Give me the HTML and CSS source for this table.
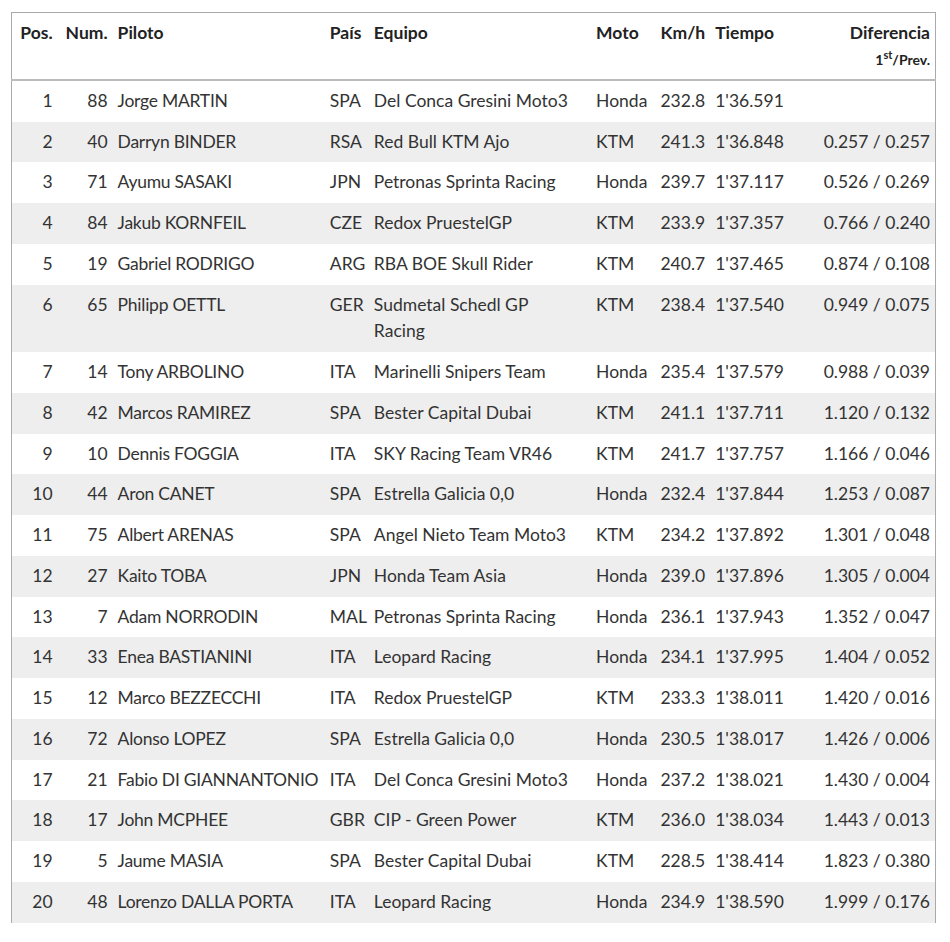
FILE: index.html
```html
<!DOCTYPE html>
<html lang="es">
<head>
<meta charset="utf-8">
<title>Clasificación</title>
<link rel="stylesheet" href="styles.css">
</head>
<body>
<div class="wrap">
<table class="results">
  <colgroup>
    <col class="c-pos"><col class="c-num"><col class="c-rider"><col class="c-nat"><col class="c-team"><col class="c-bike"><col class="c-speed"><col class="c-time"><col class="c-gap">
  </colgroup>
  <thead>
    <tr>
      <th class="r">Pos.</th>
      <th class="r">Num.</th>
      <th>Piloto</th>
      <th>País</th>
      <th>Equipo</th>
      <th>Moto</th>
      <th class="r">Km/h</th>
      <th>Tiempo</th>
      <th class="r">Diferencia<span class="sub">1<sup>st</sup>/Prev.</span></th>
    </tr>
  </thead>
  <tbody>
    <tr><td class="r">1</td><td class="r">88</td><td class="rider">Jorge MARTIN</td><td>SPA</td><td class="team">Del Conca Gresini Moto3</td><td>Honda</td><td class="r">232.8</td><td>1'36.591</td><td class="r"></td></tr>
    <tr><td class="r">2</td><td class="r">40</td><td class="rider">Darryn BINDER</td><td>RSA</td><td class="team">Red Bull KTM Ajo</td><td>KTM</td><td class="r">241.3</td><td>1'36.848</td><td class="r">0.257 / 0.257</td></tr>
    <tr><td class="r">3</td><td class="r">71</td><td class="rider">Ayumu SASAKI</td><td>JPN</td><td class="team">Petronas Sprinta Racing</td><td>Honda</td><td class="r">239.7</td><td>1'37.117</td><td class="r">0.526 / 0.269</td></tr>
    <tr><td class="r">4</td><td class="r">84</td><td class="rider">Jakub KORNFEIL</td><td>CZE</td><td class="team">Redox PruestelGP</td><td>KTM</td><td class="r">233.9</td><td>1'37.357</td><td class="r">0.766 / 0.240</td></tr>
    <tr><td class="r">5</td><td class="r">19</td><td class="rider">Gabriel RODRIGO</td><td>ARG</td><td class="team">RBA BOE Skull Rider</td><td>KTM</td><td class="r">240.7</td><td>1'37.465</td><td class="r">0.874 / 0.108</td></tr>
    <tr><td class="r">6</td><td class="r">65</td><td class="rider">Philipp OETTL</td><td>GER</td><td class="team">Sudmetal Schedl GP Racing</td><td>KTM</td><td class="r">238.4</td><td>1'37.540</td><td class="r">0.949 / 0.075</td></tr>
    <tr><td class="r">7</td><td class="r">14</td><td class="rider">Tony ARBOLINO</td><td>ITA</td><td class="team">Marinelli Snipers Team</td><td>Honda</td><td class="r">235.4</td><td>1'37.579</td><td class="r">0.988 / 0.039</td></tr>
    <tr><td class="r">8</td><td class="r">42</td><td class="rider">Marcos RAMIREZ</td><td>SPA</td><td class="team">Bester Capital Dubai</td><td>KTM</td><td class="r">241.1</td><td>1'37.711</td><td class="r">1.120 / 0.132</td></tr>
    <tr><td class="r">9</td><td class="r">10</td><td class="rider">Dennis FOGGIA</td><td>ITA</td><td class="team">SKY Racing Team VR46</td><td>KTM</td><td class="r">241.7</td><td>1'37.757</td><td class="r">1.166 / 0.046</td></tr>
    <tr><td class="r">10</td><td class="r">44</td><td class="rider">Aron CANET</td><td>SPA</td><td class="team">Estrella Galicia 0,0</td><td>Honda</td><td class="r">232.4</td><td>1'37.844</td><td class="r">1.253 / 0.087</td></tr>
    <tr><td class="r">11</td><td class="r">75</td><td class="rider">Albert ARENAS</td><td>SPA</td><td class="team">Angel Nieto Team Moto3</td><td>KTM</td><td class="r">234.2</td><td>1'37.892</td><td class="r">1.301 / 0.048</td></tr>
    <tr><td class="r">12</td><td class="r">27</td><td class="rider">Kaito TOBA</td><td>JPN</td><td class="team">Honda Team Asia</td><td>Honda</td><td class="r">239.0</td><td>1'37.896</td><td class="r">1.305 / 0.004</td></tr>
    <tr><td class="r">13</td><td class="r">7</td><td class="rider">Adam NORRODIN</td><td>MAL</td><td class="team">Petronas Sprinta Racing</td><td>Honda</td><td class="r">236.1</td><td>1'37.943</td><td class="r">1.352 / 0.047</td></tr>
    <tr><td class="r">14</td><td class="r">33</td><td class="rider">Enea BASTIANINI</td><td>ITA</td><td class="team">Leopard Racing</td><td>Honda</td><td class="r">234.1</td><td>1'37.995</td><td class="r">1.404 / 0.052</td></tr>
    <tr><td class="r">15</td><td class="r">12</td><td class="rider">Marco BEZZECCHI</td><td>ITA</td><td class="team">Redox PruestelGP</td><td>KTM</td><td class="r">233.3</td><td>1'38.011</td><td class="r">1.420 / 0.016</td></tr>
    <tr><td class="r">16</td><td class="r">72</td><td class="rider">Alonso LOPEZ</td><td>SPA</td><td class="team">Estrella Galicia 0,0</td><td>Honda</td><td class="r">230.5</td><td>1'38.017</td><td class="r">1.426 / 0.006</td></tr>
    <tr><td class="r">17</td><td class="r">21</td><td class="rider">Fabio DI GIANNANTONIO</td><td>ITA</td><td class="team">Del Conca Gresini Moto3</td><td>Honda</td><td class="r">237.2</td><td>1'38.021</td><td class="r">1.430 / 0.004</td></tr>
    <tr><td class="r">18</td><td class="r">17</td><td class="rider">John MCPHEE</td><td>GBR</td><td class="team">CIP - Green Power</td><td>KTM</td><td class="r">236.0</td><td>1'38.034</td><td class="r">1.443 / 0.013</td></tr>
    <tr><td class="r">19</td><td class="r">5</td><td class="rider">Jaume MASIA</td><td>SPA</td><td class="team">Bester Capital Dubai</td><td>KTM</td><td class="r">228.5</td><td>1'38.414</td><td class="r">1.823 / 0.380</td></tr>
    <tr><td class="r">20</td><td class="r">48</td><td class="rider">Lorenzo DALLA PORTA</td><td>ITA</td><td class="team">Leopard Racing</td><td>Honda</td><td class="r">234.9</td><td>1'38.590</td><td class="r">1.999 / 0.176</td></tr>
  </tbody>
</table>
</div>
</body>
</html>
```

FILE: styles.css
```css
html, body {
  margin: 0;
  padding: 0;
  background: #fff;
}

.wrap {
  padding: 12px 0 0 11px;
}

.results {
  width: 925px;
  table-layout: fixed;
  border-collapse: collapse;
  border-top: 1px solid #aaa;
  border-left: 1px solid #aaa;
  border-right: 1px solid #aaa;
  font-family: Lato, "Source Sans Pro", "Open Sans", sans-serif;
  font-size: 17.5px;
  color: #333;
}

.c-pos { width: 46px; }
.c-num { width: 55px; }
.c-rider { width: 212px; }
.c-nat { width: 44px; }
.c-team { width: 222px; }
.c-bike { width: 64px; }
.c-speed { width: 55px; }
.c-time { width: 75px; }
.c-gap { width: 150px; }

.results th,
.results td {
  padding: 7px 5px;
  line-height: 26.75px;
  vertical-align: top;
  text-align: left;
}

.results th {
  font-weight: 700;
  color: #222;
  padding-bottom: 6px;
}

.results thead tr {
  border-bottom: 2px solid #bbb;
}

.results .r {
  text-align: right;
}

.results td.rider {
  white-space: nowrap;
  letter-spacing: -0.25px;
}

.results td.team {
  padding-right: 12px;
}

.results tbody tr:nth-child(even) {
  background: #eee;
}

.sub {
  display: block;
  font-size: 14px;
  line-height: 26px;
}

.sub sup {
  font-size: 11px;
  line-height: 0;
}
```
